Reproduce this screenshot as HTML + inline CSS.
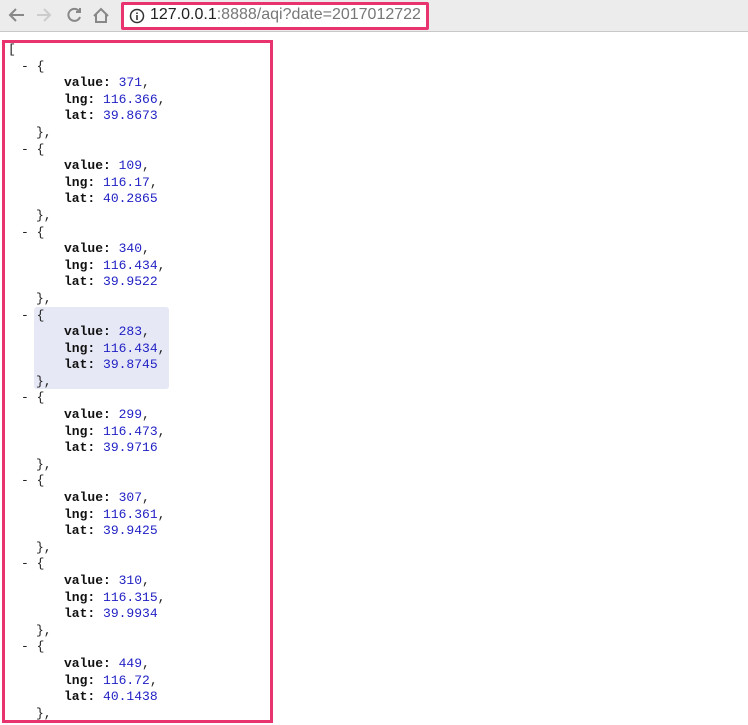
<!DOCTYPE html>
<html><head><style>
body{margin:0;width:748px;height:725px;background:#fff;position:relative;overflow:hidden;font-family:"Liberation Sans",sans-serif}
.bar{position:absolute;left:0;top:0;width:748px;height:31px;background:#ececec;border-bottom:1px solid #c8c8c8}
.addr{position:absolute;left:121px;top:2px;width:302px;height:22px;border:3px solid #e8336e;background:#fff;border-radius:2px}
.addr span{position:absolute;left:26px;top:1px;font-size:16px;color:#777;white-space:nowrap}
.addr b{font-weight:normal;color:#222}
.frame{position:absolute;left:2px;top:40px;width:265px;height:677px;border:3px solid #e8336e}
.code{position:absolute;left:0;top:42px;font-family:"Liberation Mono",monospace;font-size:13px;line-height:16.6px;color:#222}
.l{height:16.6px;white-space:pre}
.k{font-weight:bold;color:#111}
.v{color:#1f1fc4}
.hl{position:absolute;left:34px;top:307px;width:135px;height:82px;background:#e6e8f6;border-radius:3px}
</style></head><body>
<div class="bar">
<svg width="120" height="30" style="position:absolute;left:0;top:0" fill="none" stroke-width="2">
<path d="M24 15H11M16 9l-6 6 6 6" stroke="#888"/>
<path d="M37 15h12M44 9l6 6-6 6" stroke="#ccc"/>
<path d="M79 11a6 6 0 1 0 1 6M80 8v4h-4" stroke="#888"/>
<path d="M94 16l7-7 7 7M96 14v8h10v-8" stroke="#888"/>
</svg>
</div>
<div class="addr"><svg width="16" height="16" style="position:absolute;left:5px;top:3px"><circle cx="8" cy="8" r="6.5" fill="none" stroke="#333" stroke-width="1.5"/><path d="M8 7v5M8 4.5v1.5" stroke="#333" stroke-width="1.6"/></svg><span><b>127.0.0.1</b>:8888/aqi?date=2017012722</span></div>
<div class="frame"></div>
<div class="hl"></div>
<div class="code">
<div class="l" style="padding-left:8px">[</div>
<div class="l" style="padding-left:21px">- {</div><div class="l" style="padding-left:64px"><span class="k">value:</span> <span class="v">371</span>,</div><div class="l" style="padding-left:64px"><span class="k">lng:</span> <span class="v">116.366</span>,</div><div class="l" style="padding-left:64px"><span class="k">lat:</span> <span class="v">39.8673</span></div><div class="l" style="padding-left:36px">},</div>
<div class="l" style="padding-left:21px">- {</div><div class="l" style="padding-left:64px"><span class="k">value:</span> <span class="v">109</span>,</div><div class="l" style="padding-left:64px"><span class="k">lng:</span> <span class="v">116.17</span>,</div><div class="l" style="padding-left:64px"><span class="k">lat:</span> <span class="v">40.2865</span></div><div class="l" style="padding-left:36px">},</div>
<div class="l" style="padding-left:21px">- {</div><div class="l" style="padding-left:64px"><span class="k">value:</span> <span class="v">340</span>,</div><div class="l" style="padding-left:64px"><span class="k">lng:</span> <span class="v">116.434</span>,</div><div class="l" style="padding-left:64px"><span class="k">lat:</span> <span class="v">39.9522</span></div><div class="l" style="padding-left:36px">},</div>
<div class="l" style="padding-left:21px">- {</div><div class="l" style="padding-left:64px"><span class="k">value:</span> <span class="v">283</span>,</div><div class="l" style="padding-left:64px"><span class="k">lng:</span> <span class="v">116.434</span>,</div><div class="l" style="padding-left:64px"><span class="k">lat:</span> <span class="v">39.8745</span></div><div class="l" style="padding-left:36px">},</div>
<div class="l" style="padding-left:21px">- {</div><div class="l" style="padding-left:64px"><span class="k">value:</span> <span class="v">299</span>,</div><div class="l" style="padding-left:64px"><span class="k">lng:</span> <span class="v">116.473</span>,</div><div class="l" style="padding-left:64px"><span class="k">lat:</span> <span class="v">39.9716</span></div><div class="l" style="padding-left:36px">},</div>
<div class="l" style="padding-left:21px">- {</div><div class="l" style="padding-left:64px"><span class="k">value:</span> <span class="v">307</span>,</div><div class="l" style="padding-left:64px"><span class="k">lng:</span> <span class="v">116.361</span>,</div><div class="l" style="padding-left:64px"><span class="k">lat:</span> <span class="v">39.9425</span></div><div class="l" style="padding-left:36px">},</div>
<div class="l" style="padding-left:21px">- {</div><div class="l" style="padding-left:64px"><span class="k">value:</span> <span class="v">310</span>,</div><div class="l" style="padding-left:64px"><span class="k">lng:</span> <span class="v">116.315</span>,</div><div class="l" style="padding-left:64px"><span class="k">lat:</span> <span class="v">39.9934</span></div><div class="l" style="padding-left:36px">},</div>
<div class="l" style="padding-left:21px">- {</div><div class="l" style="padding-left:64px"><span class="k">value:</span> <span class="v">449</span>,</div><div class="l" style="padding-left:64px"><span class="k">lng:</span> <span class="v">116.72</span>,</div><div class="l" style="padding-left:64px"><span class="k">lat:</span> <span class="v">40.1438</span></div><div class="l" style="padding-left:36px">},</div>
</div>
</body></html>
